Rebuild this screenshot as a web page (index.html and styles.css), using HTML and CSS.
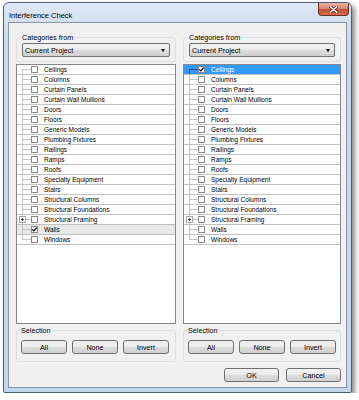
FILE: index.html
```html
<!DOCTYPE html>
<html>
<head>
<meta charset="utf-8">
<link rel="stylesheet" href="styles.css">
</head>
<body>
<div class="window">
  <div class="titlebar">
    <span class="title">Interference Check</span>
    <div class="close"><svg width="9" height="7" viewBox="0 0 9 7"><path d="M1.2 0.8 L7.8 6.2 M7.8 0.8 L1.2 6.2" stroke="#5a2a22" stroke-width="2.8" stroke-linecap="round"/><path d="M1.2 0.8 L7.8 6.2 M7.8 0.8 L1.2 6.2" stroke="#fff" stroke-width="1.4" stroke-linecap="round"/></svg></div>
  </div>
  <div class="client">
    <div class="columns">
      <div class="col">
        <fieldset class="group cat">
          <legend>Categories from</legend>
          <div class="combo"><span>Current Project</span><span class="arrow"></span></div>
        </fieldset>
        <div class="list">
          <div class="row first"><span class="tree"></span><span class="cb"></span><span class="lbl">Ceilings</span></div>
          <div class="row"><span class="tree"></span><span class="cb"></span><span class="lbl">Columns</span></div>
          <div class="row"><span class="tree"></span><span class="cb"></span><span class="lbl">Curtain Panels</span></div>
          <div class="row"><span class="tree"></span><span class="cb"></span><span class="lbl">Curtain Wall Mullions</span></div>
          <div class="row"><span class="tree"></span><span class="cb"></span><span class="lbl">Doors</span></div>
          <div class="row"><span class="tree"></span><span class="cb"></span><span class="lbl">Floors</span></div>
          <div class="row"><span class="tree"></span><span class="cb"></span><span class="lbl">Generic Models</span></div>
          <div class="row"><span class="tree"></span><span class="cb"></span><span class="lbl">Plumbing Fixtures</span></div>
          <div class="row"><span class="tree"></span><span class="cb"></span><span class="lbl">Railings</span></div>
          <div class="row"><span class="tree"></span><span class="cb"></span><span class="lbl">Ramps</span></div>
          <div class="row"><span class="tree"></span><span class="cb"></span><span class="lbl">Roofs</span></div>
          <div class="row"><span class="tree"></span><span class="cb"></span><span class="lbl">Specialty Equipment</span></div>
          <div class="row"><span class="tree"></span><span class="cb"></span><span class="lbl">Stairs</span></div>
          <div class="row"><span class="tree"></span><span class="cb"></span><span class="lbl">Structural Columns</span></div>
          <div class="row"><span class="tree"></span><span class="cb"></span><span class="lbl">Structural Foundations</span></div>
          <div class="row"><span class="tree"><span class="exp"></span></span><span class="cb"></span><span class="lbl">Structural Framing</span></div>
          <div class="row hover"><span class="tree"></span><span class="cb"><svg width="5" height="5" viewBox="0 0 5 5"><path d="M0.3 2.4 L1.8 3.9 L4.7 0.6" fill="none" stroke="#000" stroke-width="1.2"/></svg></span><span class="lbl">Walls</span></div>
          <div class="row last"><span class="tree"></span><span class="cb"></span><span class="lbl">Windows</span></div>
        </div>
        <fieldset class="group selg">
          <legend>Selection</legend>
          <div class="btns"><button class="btn">All</button><button class="btn">None</button><button class="btn">Invert</button></div>
        </fieldset>
      </div>
      <div class="col">
        <fieldset class="group cat">
          <legend>Categories from</legend>
          <div class="combo"><span>Current Project</span><span class="arrow"></span></div>
        </fieldset>
        <div class="list">
          <div class="row first selected"><span class="tree"></span><span class="cb"><svg width="5" height="5" viewBox="0 0 5 5"><path d="M0.3 2.4 L1.8 3.9 L4.7 0.6" fill="none" stroke="#000" stroke-width="1.2"/></svg></span><span class="lbl">Ceilings</span></div>
          <div class="row"><span class="tree"></span><span class="cb"></span><span class="lbl">Columns</span></div>
          <div class="row"><span class="tree"></span><span class="cb"></span><span class="lbl">Curtain Panels</span></div>
          <div class="row"><span class="tree"></span><span class="cb"></span><span class="lbl">Curtain Wall Mullions</span></div>
          <div class="row"><span class="tree"></span><span class="cb"></span><span class="lbl">Doors</span></div>
          <div class="row"><span class="tree"></span><span class="cb"></span><span class="lbl">Floors</span></div>
          <div class="row"><span class="tree"></span><span class="cb"></span><span class="lbl">Generic Models</span></div>
          <div class="row"><span class="tree"></span><span class="cb"></span><span class="lbl">Plumbing Fixtures</span></div>
          <div class="row"><span class="tree"></span><span class="cb"></span><span class="lbl">Railings</span></div>
          <div class="row"><span class="tree"></span><span class="cb"></span><span class="lbl">Ramps</span></div>
          <div class="row"><span class="tree"></span><span class="cb"></span><span class="lbl">Roofs</span></div>
          <div class="row"><span class="tree"></span><span class="cb"></span><span class="lbl">Specialty Equipment</span></div>
          <div class="row"><span class="tree"></span><span class="cb"></span><span class="lbl">Stairs</span></div>
          <div class="row"><span class="tree"></span><span class="cb"></span><span class="lbl">Structural Columns</span></div>
          <div class="row"><span class="tree"></span><span class="cb"></span><span class="lbl">Structural Foundations</span></div>
          <div class="row"><span class="tree"><span class="exp"></span></span><span class="cb"></span><span class="lbl">Structural Framing</span></div>
          <div class="row"><span class="tree"></span><span class="cb"></span><span class="lbl">Walls</span></div>
          <div class="row last"><span class="tree"></span><span class="cb"></span><span class="lbl">Windows</span></div>
        </div>
        <fieldset class="group selg">
          <legend>Selection</legend>
          <div class="btns"><button class="btn">All</button><button class="btn">None</button><button class="btn">Invert</button></div>
        </fieldset>
      </div>
    </div>
    <div class="footer">
      <button class="btn wide">OK</button>
      <button class="btn wide">Cancel</button>
    </div>
  </div>
</div>
</body>
</html>
```

FILE: styles.css
```css
* { box-sizing: border-box; }
body {
  margin: 0;
  background: #fff;
  font-family: "Liberation Sans", Arial, sans-serif;
  color: #000;
}
.window {
  margin: 2px 0 0 3px;
  width: 349px;
  height: 391px;
  border: 1px solid #4f5f73;
  border-radius: 6px 6px 2px 2px;
  background: linear-gradient(#dfe8f4, #c9d9ec 40px, #c4d6ea);
  box-shadow: 3px 3px 5px rgba(0, 0, 0, 0.45);
  padding: 0 4px 4px;
  display: flex;
  flex-direction: column;
}
.titlebar {
  height: 19px;
  display: flex;
  align-items: flex-start;
  flex: none;
}
.title {
  font-size: 7.5px;
  line-height: 9px;
  margin: 8px 0 0 1px;
}
.close {
  margin-left: auto;
  margin-right: -2px;
  width: 31px;
  height: 13px;
  border: 1px solid #6e2e24;
  border-top: none;
  border-radius: 0 0 4px 4px;
  background: linear-gradient(#eab0a2, #d88a77 45%, #c44c35 55%, #d2704f);
  display: flex;
  align-items: center;
  justify-content: center;
}
.client {
  flex: 1;
  background: #f0f0f0;
  border: 1px solid #8597ad;
  display: flex;
  flex-direction: column;
  padding: 0 5px 0 7px;
}
.columns {
  display: grid;
  grid-template-columns: 160px 158px;
  column-gap: 7px;
}
.col { display: flex; flex-direction: column; }
.group {
  margin: 0;
  min-width: 0;
  border: 1px solid #d8e0e6;
  border-radius: 3px;
}
.group legend {
  font-size: 7.2px;
  line-height: 9px;
  padding: 0 1px;
  margin-left: -1px;
}
.cat {
  margin-top: 10px;
  padding: 1px 5px 4px;
}
.combo {
  height: 14px;
  border: 1px solid #707070;
  border-radius: 2px;
  background: linear-gradient(#f2f2f2, #ebebeb 50%, #dddddd 50%, #cfcfcf);
  display: flex;
  align-items: center;
  padding: 0 4px 0 2px;
  font-size: 7.2px;
}
.arrow {
  margin-left: auto;
  width: 0;
  height: 0;
  border-left: 2.5px solid transparent;
  border-right: 2.5px solid transparent;
  border-top: 3px solid #000;
}
.list {
  margin-top: 2px;
  height: 260px;
  border: 1px solid #828790;
  background: #fff;
}
.row {
  display: flex;
  align-items: center;
  height: 10px;
  border-bottom: 1px solid #c2c2c2;
}
.row.hover { background: #e8e8e8; }
.row.selected { background: #3399ff; color: #fff; }
.tree {
  width: 14px;
  height: 9px;
  flex: none;
  align-self: flex-start;
  background-image:
    linear-gradient(#c4c4c4, #c4c4c4),
    linear-gradient(#c4c4c4, #c4c4c4);
  background-size: 9px 1px, 1px 9px;
  background-position: 5px 4px, 5px 0;
  background-repeat: no-repeat;
}
.row.selected .tree {
  background-image:
    linear-gradient(#2a4f80, #2a4f80),
    linear-gradient(#2a4f80, #2a4f80);
}
.row.first .tree {
  background-size: 9px 1px, 1px 5px;
  background-position: 5px 4px, 5px 4px;
}
.row.last .tree {
  background-size: 9px 1px, 1px 5px;
  background-position: 5px 4px, 5px 0;
}
.exp {
  display: block;
  width: 7px;
  height: 7px;
  margin: 1px 0 0 2px;
  border: 1px solid #a5a5a5;
  background:
    linear-gradient(#444, #444) 1px 2px / 3px 1px no-repeat,
    linear-gradient(#444, #444) 2px 1px / 1px 3px no-repeat,
    #fff;
}
.cb {
  width: 7px;
  height: 7px;
  flex: none;
  border: 1px solid #8a8a8a;
  background: #fff;
  display: flex;
  align-items: center;
  justify-content: center;
}
.cb svg { display: block; }
.lbl {
  font-size: 6.5px;
  line-height: 9px;
  margin-left: 6px;
  white-space: nowrap;
}
.selg {
  margin-top: 2px;
  padding: 5px 4px 7px;
}
.btns { display: flex; gap: 5px; }
.btn {
  width: 46px;
  height: 14px;
  padding: 0;
  font-family: "Liberation Sans", Arial, sans-serif;
  font-size: 7.2px;
  font-weight: normal;
  color: #000;
  border: 1px solid #707070;
  border-radius: 3px;
  background: linear-gradient(#f2f2f2, #ebebeb 50%, #dddddd 50%, #cfcfcf);
}
.footer {
  display: flex;
  justify-content: flex-end;
  gap: 7px;
  margin-top: 6px;
}
.btn.wide { width: 55px; }
```
